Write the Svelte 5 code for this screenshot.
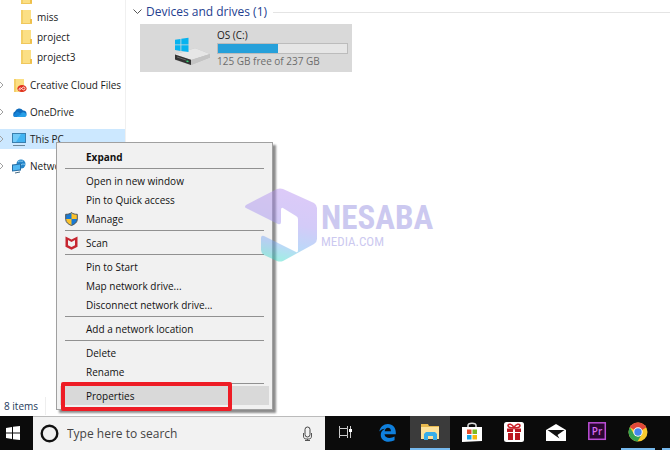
<script>
  const folders = ['', 'miss', 'project', 'project3'];
  const places = [
    { name: 'Creative Cloud Files', icon: 'cloudfiles' },
    { name: 'OneDrive', icon: 'onedrive' },
    { name: 'This PC', icon: 'pc', selected: true },
    { name: 'Network', icon: 'network' }
  ];
  const groups = [
    [{ label: 'Expand', bold: true }],
    [{ label: 'Open in new window' }, { label: 'Pin to Quick access' }, { label: 'Manage', icon: 'shield' }],
    [{ label: 'Scan', icon: 'mcafee' }],
    [{ label: 'Pin to Start' }, { label: 'Map network drive...' }, { label: 'Disconnect network drive...' }],
    [{ label: 'Add a network location' }],
    [{ label: 'Delete' }, { label: 'Rename' }],
    [{ label: 'Properties', active: true }]
  ];
  const apps = [
    { id: 'taskview', label: 'Task View' },
    { id: 'edge', label: 'Edge' },
    { id: 'explorer', label: 'File Explorer', active: true },
    { id: 'store', label: 'Store' },
    { id: 'gift', label: 'Gift' },
    { id: 'mail', label: 'Mail' },
    { id: 'premiere', label: 'Premiere Pro' },
    { id: 'chrome', label: 'Chrome', running: true },
    { id: 'next', label: 'More', running: true }
  ];
  const used = 112;
  const total = 237;
</script>

{#snippet folder()}
  <svg width="12" height="16" viewBox="0 0 12 16" aria-hidden="true">
    <path d="M0 1h10v9l1 1v4H0z" fill="#fbdf85" />
    <path d="M0 1h2v14H0z" fill="#f3cf68" />
    <path d="M9 10h2v4H9z" fill="#eebf4c" />
    <path d="M0 14h11v1H0z" fill="#f0c75c" />
  </svg>
{/snippet}

<div class="desktop">
  <div class="explorer">
    <nav aria-label="Folders">
      <ul class="folders">
        {#each folders as name}
          <li>{@render folder()}<span>{name}</span></li>
        {/each}
      </ul>
      <ul class="places">
        {#each places as p}
          <li class:selected={p.selected}>
            <svg class="chev" width="5" height="8" viewBox="0 0 5 8" aria-hidden="true"><path d="M-1 0l4 4-4 4" fill="none" stroke="#a0a0a0" /></svg>
            <svg class="picon" width="15" height="15" viewBox="0 0 15 15" aria-hidden="true">
              {#if p.icon === 'cloudfiles'}
                <path d="M2 1h10v13H2z" fill="#fbdf85" /><path d="M2 1h2v13H2z" fill="#f3cf68" />
                <ellipse cx="10" cy="10.5" rx="4.6" ry="3.6" fill="#e0301e" />
                <path d="M7 11.500c0-2 2-2 3-.6s3 1.400 3-.4-2-2-3-.4-3 2.500-3 1.400" fill="none" stroke="#fff" stroke-width=".8" />
              {:else if p.icon === 'onedrive'}
                <path d="M3 12a3 3 0 0 1 0-5.500A4.500 4.500 0 0 1 11 5.500a3.300 3.300 0 0 1 1 6.500z" fill="#0f6cbd" />
                <path d="M4 12l6-4.500a3.600 3.600 0 0 1 4.500 2.500c0 1.300-1 2-2 2z" fill="#28a0e8" />
                <path d="M1 11l4-4.500 5 2.500-6 3c-1.500 0-2.500-.5-3-1z" fill="#1684d8" />
              {:else if p.icon === 'pc'}
                <path d="M0 1h14v10H0z" fill="#3a7fae" /><path d="M1 2h12v8H1z" fill="#42b4f2" /><path d="M1 2h8L4 10H1z" fill="#72caf8" />
                <path d="M1 13h12v1H1z" fill="#6d8798" />
              {:else}
                <circle cx="9" cy="5" r="4.500" fill="#2485c9" /><path d="M6 3c2-2 3 0 5-1M9 6c2-2 3 0 4-1" stroke="#8fd0f5" fill="none" />
                <path d="M0 5.500l9-1v7l-9 1z" fill="#276da3" /><path d="M1 6.500l7-1v5l-7 1z" fill="#51b8f3" /><path d="M3 14l5-1" stroke="#476b84" />
              {/if}
            </svg>
            <span>{p.name}</span>
          </li>
        {/each}
      </ul>
    </nav>

    <main>
      <h1>
        <svg width="9" height="6" viewBox="0 0 9 6" aria-hidden="true"><path d="M0.500 0.500l4 4 4-4" fill="none" stroke="#555" /></svg>
        <span>Devices and drives (1)</span>
      </h1>
      <div class="drive">
        <svg width="38" height="30" viewBox="0 0 38 30" aria-hidden="true">
          <path d="M1 17.500L20 11.500q1-.4 2 0L36 17v3.500L17 28 1 23z" fill="#bdbdbd" />
          <path d="M1 17.500L20 11.500q1-.4 2 0L36 17 17 23z" fill="#e6e6e6" />
          <path d="M17 23l19-6v3.500L17 28z" fill="#c4c4c4" />
          <path d="M1 17.500l16 5.300V28L1 22.500z" fill="#333" />
          <path d="M3 20l9 3" stroke="#666" /><path d="M12.500 24l2 .6" stroke="#38d878" stroke-width="1.500" />
          <path d="M1 2.800l5.500-.9v5.600H1zM7.300 1.800L14.500.7v6.800H7.300zM1 8.300h5.500v5.600L1 13zM7.300 8.300h7.200v6.800L7.300 14z" fill="#08b3ef" />
        </svg>
        <div class="info">
          <label for="space">OS (C:)</label>
          <div class="bar" id="space" role="progressbar" aria-label="Used space" aria-valuenow={used} aria-valuemax={total}>
            <div class="fill" style:width="{(used / total) * 100 - 1}%"></div>
          </div>
          <span class="free">125 GB free of 237 GB</span>
        </div>
      </div>
    </main>
  </div>

  <footer><span>8 items</span></footer>

  <div class="taskbar">
    <button class="start" aria-label="Start">
      <svg width="14" height="14" viewBox="0 0 14 14"><path d="M0 2l6-1v5.500H0zM7 .8L14 0v6.500H7zM0 7.500h6V13l-6-1zM7 7.500h7V14l-7-.8z" fill="#fff" /></svg>
    </button>
    <div class="search">
      <svg width="19" height="19" viewBox="0 0 19 19" aria-hidden="true"><circle cx="9.500" cy="9.500" r="7.800" fill="none" stroke="#111" stroke-width="2.400" /></svg>
      <input type="text" aria-label="Search" placeholder="Type here to search" />
      <svg width="11" height="16" viewBox="0 0 11 16" aria-hidden="true">
        <rect x="3" y="1" width="5" height="10" rx="2.500" fill="none" stroke="#444" />
        <path d="M1.500 7v3c0 2 1 3 2.500 3h3c1.500 0 2.500-1 2.500-3V7M5.500 13v2M3 14.500h5" fill="none" stroke="#555" />
      </svg>
    </div>
    <div class="apps">
      {#each apps as a}
        <button class:active={a.active} class:running={a.running} aria-label={a.label}>
          <svg width="22" height="22" viewBox="0 0 22 22">
            {#if a.id === 'taskview'}
              <path d="M4.500 5v2.500h8V5M4.500 17v-2.500h8V17M4.500 7.500v7M12.500 7.500v7M15.500 5v12" fill="none" stroke="#ccc" />
              <path d="M14 8h3v3h-3z" fill="#fff" />
            {:else if a.id === 'edge'}
              <path transform="translate(0 1) scale(.94)" d="M2.500 10C3.500 5 7 2 11.500 2c5.500 0 8.500 4 8.500 9v2H8c.2 2.800 2.500 4 5.300 4 2 0 3.800-.5 5.400-1.500v4c-1.800 1-4 1.500-6.400 1.500C7.500 21 4 18 4 13.800c0-3 1.500-5.300 4.300-6.700C5.800 7.300 4 8.300 2.500 10zM8.200 9.800h6.600c0-2.300-1-3.800-3.200-3.800-1.900 0-3.100 1.500-3.400 3.800z" fill="#0f7fdc" />
            {:else if a.id === 'explorer'}
              <path d="M2 3h7l1 2h10v13H2z" fill="#e8b94e" />
              <path d="M2 6h18v12H2z" fill="#fde29a" />
              <path d="M5 19v-6l2-2h9l2 2v6h-4v-4H9v4z" fill="#38aee8" />
            {:else if a.id === 'store'}
              <path d="M7 7V4.500C7 1.500 15 1.500 15 4.500V7" fill="none" stroke="#ddd" stroke-width="1.500" />
              <path d="M1 6h20v14l-20 1z" fill="#fff" />
              <path d="M6 8.500h4.500V13H6z" fill="#e64b28" /><path d="M11.500 8.500H16V13h-4.500z" fill="#7dbb21" />
              <path d="M6 14h4.500v4.500H6z" fill="#14a4e8" /><path d="M11.500 14H16v4.500h-4.500z" fill="#f7b80b" />
            {:else if a.id === 'gift'}
              <rect x="1" y="1" width="20" height="20" rx="2.500" fill="#fff" />
              <path d="M4 7.500h6V11H4zM12 7.500h6V11h-6zM5 12h5v7H5zM12 12h5v7h-5z" fill="#ba1720" />
              <path d="M11 7C9 7 5 6.500 5 4.500S9.500 2.500 11 7c1.500-4.500 6-4.500 6-2.500S13 7 11 7z" fill="none" stroke="#cc1f28" stroke-width="1.600" />
            {:else if a.id === 'mail'}
              <path d="M1 9l10-6 10 6v11H1z" fill="#fff" />
              <path d="M2.500 9h17l-7 5 2 3.500-4-2.800z" fill="#111" />
            {:else if a.id === 'premiere'}
              <rect x="1.800" y="1.800" width="16.500" height="16.500" fill="#2b0632" stroke="#bd4fd7" stroke-width="1.500" />
              <text x="10" y="14" text-anchor="middle" font-size="10" font-weight="600" fill="#d66af0">Pr</text>
            {:else if a.id === 'chrome'}
              <circle cx="11" cy="11" r="9.500" fill="#f9cb2e" />
              <path d="M11 11L2.800 6.200A9.500 9.500 0 0 1 19.200 6.200z" fill="#e0483a" />
              <path d="M2.800 6.200A9.500 9.500 0 0 0 10.500 20.500L15 13l-4-2-4 2z" fill="#35a352" />
              <path d="M11 6.200h8.200L15 9z" fill="#e0483a" />
              <circle cx="11" cy="11" r="4.700" fill="#fff" /><circle cx="11" cy="11" r="3.700" fill="#4486ef" />
            {/if}
          </svg>
        </button>
      {/each}
    </div>
  </div>

  <div class="menu" role="menu">
    {#each groups as g}
      <div class="group">
        {#each g as item}
          <button role="menuitem" class:bold={item.bold} class:active={item.active}>
            <span class="micon">
              {#if item.icon === 'shield'}
                <svg width="13" height="14" viewBox="0 0 13 14" aria-hidden="true">
                  <path d="M6.500 0.500C5 2 3 2.300.7 2.300v5c0 3 2.500 5 5.800 6.200 3.300-1.200 5.800-3.200 5.800-6.200v-5C10 2.300 8 2 6.500.5z" fill="#fbc22c" />
                  <path d="M6.500.5v6.500H.7V2.300C3 2.300 5 2 6.500.5zM6.500 7h5.800v.3c0 3-2.500 5-5.800 6.200z" fill="#1979d3" />
                  <path d="M6.500 0.500C5 2 3 2.300.7 2.300v5c0 3 2.500 5 5.800 6.200 3.300-1.200 5.800-3.200 5.800-6.200v-5C10 2.300 8 2 6.500.5z" fill="none" stroke="#4c5660" />
                </svg>
              {:else if item.icon === 'mcafee'}
                <svg width="13" height="14" viewBox="0 0 13 14" aria-hidden="true">
                  <path d="M.5.500l6 3 6-3v10.300l-6 3-6-3zM3 4v5.300l3.500 1.800L10 9.300V4L6.500 6z" fill="#c62630" fill-rule="evenodd" />
                </svg>
              {/if}
            </span>
            {item.label}
          </button>
        {/each}
      </div>
    {/each}
    <div class="highlight"></div>
  </div>

  <div class="watermark" aria-hidden="true">
    <svg width="74" height="76" viewBox="0 0 74 76">
      <defs>
        <linearGradient id="wg" x1="0.600" y1="0" x2="0.400" y2="1">
          <stop offset="0" stop-color="#b48cf0" /><stop offset="0.450" stop-color="#a08df0" /><stop offset="0.750" stop-color="#6fa8f2" /><stop offset="1" stop-color="#28e0c0" />
        </linearGradient>
      </defs>
      <path d="M2 18L33 2q3-1 6 0l31 14q3 2 3 5v31q0 3-3 5L39 74q-3 1-6 0L20 68q-3-2-3-5V51q0-3 3-2l32 16q2 1 2-2V32q0-2-2-3L39 21q-2-1-2 2v12q0 3-3 2L2 21q-2-1 0-3z" fill="url(#wg)" />
    </svg>
    <div class="brand"><span class="big">NESABA</span><span class="small">MEDIA.COM</span></div>
  </div>
</div>

<style>
  :global(body) { margin: 0; background: #fff; }
  .desktop {
    position: relative; display: flex; flex-direction: column; min-height: 100vh; overflow: hidden;
    font: 11px/20px "Open Sans", "Noto Sans", sans-serif; color: #1a1a1a;
  }
  button, input { font: inherit; color: inherit; border: 0; margin: 0; padding: 0; background: none; }
  ul { list-style: none; margin: 0; padding: 0; }
  .explorer { display: flex; flex: 1; }
  nav { width: 125px; border-right: 1px solid #f0f0f0; font-size: 10px; white-space: nowrap; }
  .folders { margin-top: -13px; }
  .folders li { display: flex; align-items: center; height: 20px; padding-left: 21px; gap: 4px; }
  .places { display: flex; flex-direction: column; gap: 7px; padding-top: 8px; }
  .places li { display: flex; align-items: center; height: 20px; }
  .places .selected { background: #cce8ff; }
  .chev { margin-right: 7px; }
  .picon { margin-right: 3px; }
  main { flex: 1; min-width: 0; padding-left: 7px; }
  h1 { display: flex; align-items: center; gap: 4px; margin: 0; height: 24px; font-size: 12px; font-weight: 400; color: #24408f; }
  h1::after { content: ''; flex: 1; height: 1px; margin-left: 2px; background: #e4e4e4; }
  .drive { display: flex; align-items: center; gap: 5px; width: 212px; height: 48px; box-sizing: border-box; margin-left: 7px; padding: 0 4px 0 34px; background: #d9d9d9; }
  .drive svg { margin-top: 8px; }
  .info { flex: 1; display: flex; flex-direction: column; font-size: 10px; line-height: 15px; }
  .bar { height: 9px; border: 1px solid #bcbcbc; background: #e6e6e6; }
  .fill { height: 100%; background: #26a0da; }
  .free { color: #6d6d6d; }
  footer { height: 20px; padding-left: 4px; font-size: 10px; color: #1e395b; }
  footer span { display: inline-block; padding-right: 7px; border-right: 1px solid #eee; line-height: 18px; }
  .taskbar { display: flex; height: 34px; background: #0b0b0b; overflow: hidden; }
  .start { display: flex; align-items: center; justify-content: center; box-sizing: border-box; width: 33px; padding-right: 7px; }
  .search { display: flex; align-items: center; flex: 0 0 292px; box-sizing: border-box; padding: 0 12px 0 7px; border-top: 1px solid #bbb; background: #f2f2f2; }
  .search input { flex: 1; min-width: 0; height: 30px; padding-left: 8px; font-size: 12px; outline: 0; }
  .search input::placeholder { color: #444; opacity: 1; }
  .apps { display: flex; flex: 1; min-width: 0; }
  .apps button { display: flex; align-items: center; justify-content: center; flex: 0 0 40px; height: 34px; margin: 0 1px; box-sizing: border-box; border-bottom: 2px solid transparent; }
  .apps .active { background: #3b3b3b; border-color: #76b9ed; }
  .apps .running { flex-basis: 34px; margin: 0 5px 0 2px; border-color: #76b9ed; }
  .menu { position: absolute; left: 56px; top: 142px; width: 217px; box-sizing: border-box; padding: 4px 3px; border: 1px solid #a0a0a0; background: #f1f1f1; box-shadow: 3px 3px 2px rgba(0, 0, 0, 0.45); font-size: 10px; }
  .menu button { display: flex; align-items: center; width: 100%; height: 19px; text-align: left; color: #111; }
  .menu .bold { font-weight: 700; }
  .menu .active { background: #d9d9d9; }
  .micon { display: flex; width: 21px; padding-left: 5px; }
  .group + .group::before { content: ''; display: block; height: 1px; margin: 2px 5px; background: #919191; }
  .highlight { position: absolute; left: 4px; bottom: -2px; width: 163px; height: 21px; border: 4px solid #ee1c25; border-radius: 2px; }
  .watermark { position: absolute; left: 244px; top: 187px; display: flex; align-items: center; gap: 3px; opacity: 0.45; pointer-events: none; }
  .brand { display: flex; flex-direction: column; font-family: "Liberation Sans Narrow", "Roboto Condensed", "Liberation Sans", sans-serif; font-weight: 700; color: #8f88e0; }
  .big { font-size: 33px; line-height: 34px; }
  .small { font-size: 13px; line-height: 14px; font-weight: 400; }
</style>
